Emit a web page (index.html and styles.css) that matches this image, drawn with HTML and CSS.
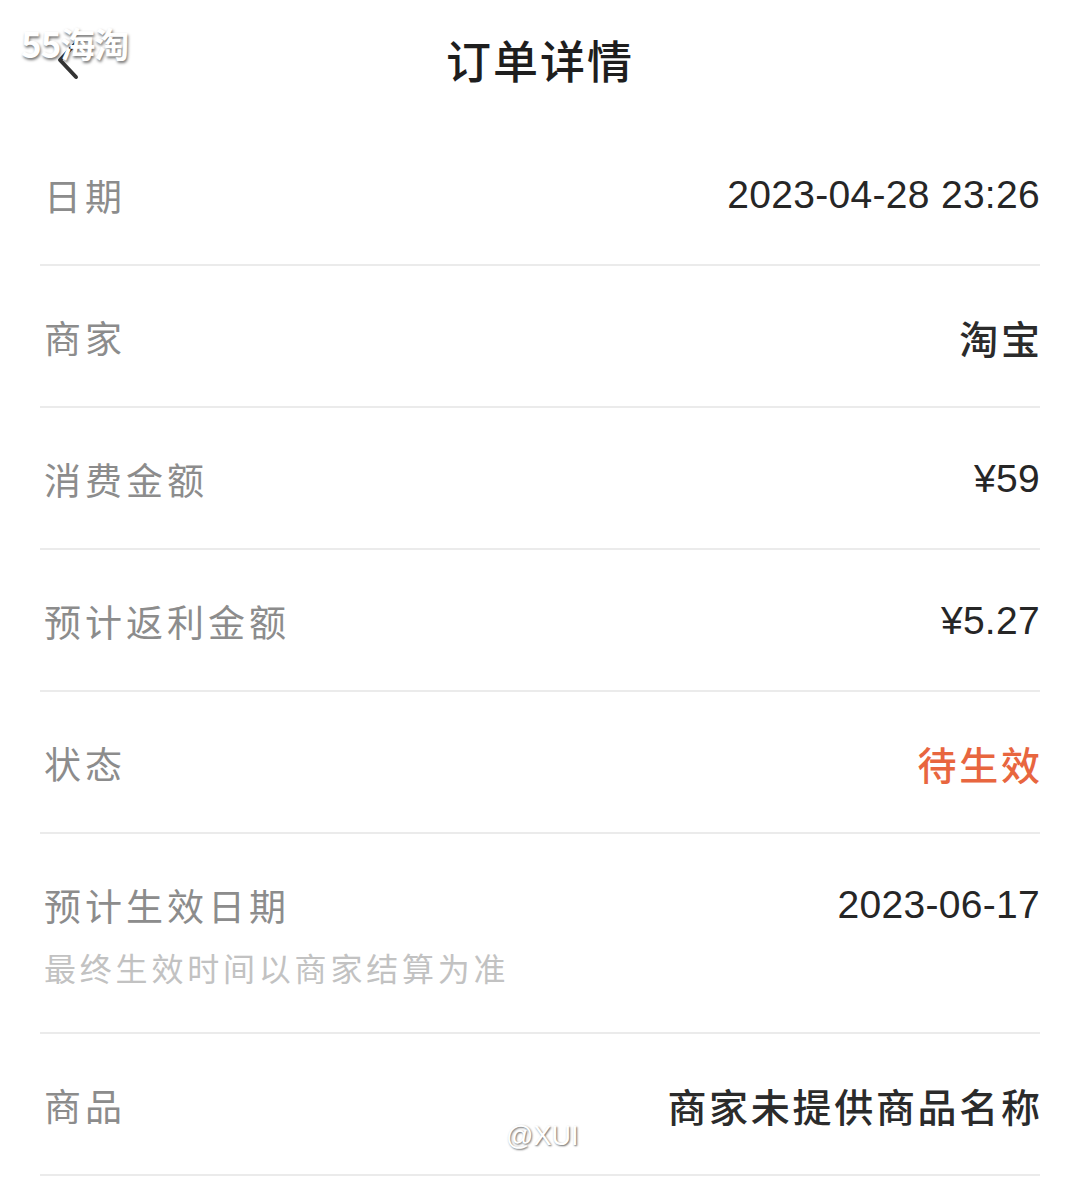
FILE: index.html
```html
<!DOCTYPE html>
<html lang="zh-CN">
<head>
  <meta charset="UTF-8">
  <meta name="viewport" content="width=device-width, initial-scale=1.0">
  <title>订单详情</title>
  <link rel="stylesheet" href="styles.css">
</head>
<body>
    <!-- Top bar with back button and title -->
    <header class="top-bar">
        <a class="back" href="#" aria-label="返回">
            <svg width="24" height="40" viewBox="0 0 24 40">
                <polyline points="20,3 4,20 20,37" fill="none" stroke="#333" stroke-width="4" stroke-linecap="round" stroke-linejoin="round"/>
            </svg>
        </a>
        <h1 class="title">订单详情</h1>
        <span></span>
    </header>

    <!-- Order detail rows -->
    <ul class="detail-list">
        <li class="row">
            <span class="label">日期</span>
            <span class="value num">2023-04-28 23:26</span>
        </li>
        <li class="row">
            <span class="label">商家</span>
            <span class="value">淘宝</span>
        </li>
        <li class="row">
            <span class="label">消费金额</span>
            <span class="value num">¥59</span>
        </li>
        <li class="row">
            <span class="label">预计返利金额</span>
            <span class="value num">¥5.27</span>
        </li>
        <li class="row">
            <span class="label">状态</span>
            <span class="value status">待生效</span>
        </li>
        <li class="row row-tall">
            <div class="label-group">
                <span class="label">预计生效日期</span>
                <span class="note">最终生效时间以商家结算为准</span>
            </div>
            <span class="value num">2023-06-17</span>
        </li>
        <li class="row">
            <span class="label">商品</span>
            <span class="value">商家未提供商品名称</span>
        </li>
    </ul>

    <!-- Image watermarks -->
    <span class="mark mark-site">55海淘</span>
    <span class="mark mark-user">@XUI</span>
</body>
</html>
```

FILE: styles.css
```css
/* Page base */
body {
    margin: 0;
    background-color: #fff;
    font-family: "Noto Sans CJK SC", "Noto Sans", sans-serif;
    color: #333;
}

/* Top bar */
.top-bar {
    height: 124px;
    display: grid;
    grid-template-columns: 1fr auto 1fr;
    align-items: center;
    padding: 0 56px;
}

.back {
    display: flex;
    align-items: center;
    height: 40px;
    padding-bottom: 4px;
}

.title {
    margin: 0 0 6px;
    font-size: 45px;
    font-weight: 500;
    letter-spacing: 2px;
    color: #1e1e1e;
}

/* Detail list */
.detail-list {
    list-style: none;
    margin: 0;
    padding: 0 40px;
}

.row {
    display: flex;
    justify-content: space-between;
    align-items: flex-start;
    padding: 46px 0 44px;
    border-bottom: 2px solid #ebebeb;
    line-height: 50px;
}

.row-tall {
    padding-bottom: 45px;
}

.label-group {
    display: flex;
    flex-direction: column;
    gap: 17px;
}

.label {
    padding-left: 4px;
    font-size: 37px;
    letter-spacing: 4px;
    color: #8c8c8c;
}

.note {
    padding-left: 4px;
    font-size: 32px;
    line-height: 40px;
    letter-spacing: 3.8px;
    color: #c2c2c2;
}

.value {
    font-size: 39px;
    font-weight: 500;
    letter-spacing: 2.7px;
    margin-right: -2.7px;
    color: #2b2b2b;
}

.value.num {
    font-family: "Liberation Sans", sans-serif;
    font-size: 39px;
    font-weight: 400;
    letter-spacing: 0.3px;
    margin-right: 0;
    color: #262626;
}

.status {
    color: #e8663f;
}

/* Watermarks laid over the screenshot */
.mark {
    position: absolute;
    color: #fff;
    text-shadow: 1px 2px 3px rgba(0, 0, 0, 0.55);
}

.mark-site {
    top: 17px;
    left: 21px;
    font-size: 35px;
    font-weight: 700;
    letter-spacing: -1px;
}

.mark-user {
    top: 1121px;
    left: 506px;
    font-family: "Liberation Sans", sans-serif;
    font-size: 27px;
    text-shadow: 1px 1px 2px rgba(0, 0, 0, 0.6);
}
```
